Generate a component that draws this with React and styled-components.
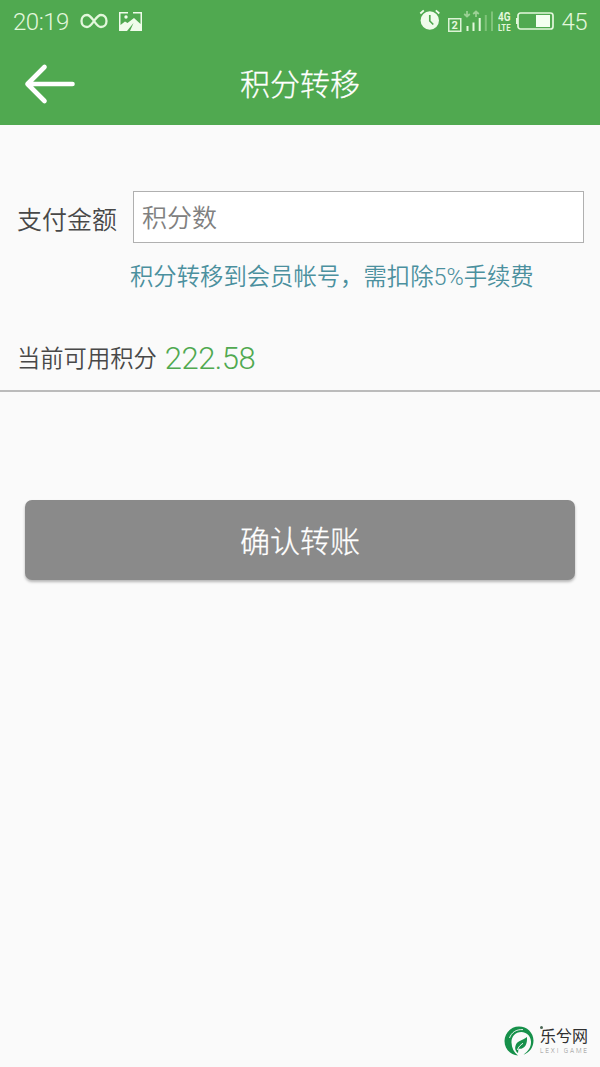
// points transfer screen

import React from "react";
import styled, { createGlobalStyle } from "styled-components";

const GlobalStyle = createGlobalStyle`
  * {
    box-sizing: border-box;
  }
  body {
    margin: 0;
    background: #fafafa;
    font-family: Roboto, "Noto Sans CJK SC", sans-serif;
    font-weight: 350;
  }
`;

const Page = styled.div`
  display: flex;
  flex-direction: column;
  height: 1067px;
  overflow: hidden;
  background: #fafafa;
`;

const Header = styled.header`
  height: 125px;
  background: #50a950;
  color: #ffffff;
`;

const StatusBar = styled.div`
  display: flex;
  justify-content: space-between;
  height: 42px;
  padding: 0 13px;
`;

const StatusGroup = styled.div`
  display: flex;
  align-items: center;
`;

const StatusText = styled.span`
  margin: 2px 0 0 ${(props) => props.$gap || "0"};
  font-size: 24px;
  font-weight: 300;
  line-height: 42px;
  letter-spacing: -0.5px;
  color: #e3f7dc;
`;

const StatusIcon = styled.svg`
  display: block;
  flex: none;
  margin-left: ${(props) => props.$gap || "0"};
`;

const TitleBar = styled.div`
  display: grid;
  grid-template-columns: 100px 1fr 100px;
  align-items: center;
  height: 83px;
`;

const BackButton = styled.button`
  padding: 0 0 0 22px;
  border: 0;
  background: none;
  color: #ffffff;
  text-align: left;

  svg {
    display: block;
  }
`;

const Title = styled.h1`
  margin: 2px 0 0;
  font-size: 30px;
  font-weight: 300;
  line-height: 44px;
  text-align: center;
  -webkit-text-stroke: 0.3px currentColor;
`;

const AmountRow = styled.label`
  display: flex;
  align-items: center;
  margin-top: 66px;
  padding: 0 16px 0 17px;
`;

const AmountLabel = styled.span`
  width: 116px;
  padding-top: 1px;
  font-size: 25px;
  color: #484848;
`;

const AmountInput = styled.input`
  flex: 1;
  min-width: 0;
  height: 52px;
  padding: 2px 8px 0;
  border: 1px solid #b0b0b0;
  border-radius: 0;
  outline: none;
  background: #ffffff;
  font: inherit;
  font-size: 25px;

  &::placeholder {
    color: #808080;
    opacity: 1;
  }
`;

const Hint = styled.p`
  margin: 16px 0 0 130px;
  font-size: 23.35px;
  line-height: 36px;
  white-space: nowrap;
  color: #4b909e;
`;

const BalanceRow = styled.div`
  display: flex;
  align-items: center;
  height: 66px;
  margin-top: 31px;
  padding: 0 17px 2px;
  border-bottom: 2px solid #bbbbbb;
  font-size: 23.3px;
  color: #484848;
`;

const Balance = styled.strong`
  margin: 3px 0 0 8px;
  font-size: 31px;
  font-weight: 300;
  letter-spacing: -0.5px;
  color: #50a950;
`;

const SubmitButton = styled.button`
  height: 80px;
  margin: 108px 25px 0;
  padding: 0 0 3px;
  border: 0;
  border-radius: 7px;
  background: #8a8a8a;
  box-shadow: 0 2px 3px rgba(0, 0, 0, 0.28);
  color: #ffffff;
  font: inherit;
  font-size: 30px;
  font-weight: 300;
  -webkit-text-stroke: 0.3px currentColor;
`;

const Brand = styled.footer`
  display: flex;
  gap: 6px;
  align-items: center;
  align-self: flex-end;
  margin: auto 11px 11px 0;
`;

const BrandText = styled.div`
  display: flex;
  flex-direction: column;
  position: relative;
  width: 49px;
  font-size: 16px;
  font-weight: 400;
  line-height: 20px;
  color: #303030;

  small {
    font-size: 6.5px;
    font-weight: 300;
    line-height: 8px;
    letter-spacing: 1.85px;
    white-space: nowrap;
    color: #929292;
  }
`;

const BrandDot = styled.i`
  position: absolute;
  top: -1px;
  left: 0;
  width: 3px;
  height: 3px;
  border-radius: 50%;
  background: #4b6655;
`;

const InfinityIcon = () => (
  <StatusIcon $gap="11px" width="28" height="16" viewBox="0 0 28 16" fill="none" stroke="#e3f7dc" strokeWidth="2.3">
    <path d="M14 8C11.5 4.5 10 2 7 2C3.5 2 1.5 4.6 1.5 8S3.5 14 7 14C10 14 11.5 11.5 14 8S18 2 21 2C24.5 2 26.5 4.6 26.5 8S24.5 14 21 14C18 14 16.5 11.5 14 8Z" />
  </StatusIcon>
);

const PictureIcon = () => (
  <StatusIcon $gap="11px" width="23" height="19" viewBox="0 0 23 19" fill="#f0fceb">
    <path d="M0 0H9V1.5H1.5V13L6 9.5L8.5 11L15 6L21.5 12V1.5H14V0H23V19H11L14.5 11L8 19H0Z" />
    <circle cx="7" cy="5" r="1.7" />
  </StatusIcon>
);

const AlarmIcon = () => (
  <StatusIcon width="21" height="24" viewBox="0 0 21 24" fill="none">
    <circle cx="10.8" cy="11.5" r="9.2" fill="#f0fceb" />
    <path d="M1.3 4.5L4.8 1.3M20.3 4.5L16.8 1.3" stroke="#f0fceb" strokeWidth="1.8" />
    <path d="M10.8 6V12L14.3 15.5" stroke="#50a950" strokeWidth="1.7" />
  </StatusIcon>
);

const SignalIcon = () => (
  <StatusIcon $gap="8px" width="46" height="24" viewBox="0 0 46 24" fill="none">
    <rect x="0.75" y="9.75" width="12" height="12.5" stroke="#dcf3d5" strokeWidth="1.5" />
    <text x="6.7" y="20" textAnchor="middle" fontSize="11" fontWeight="700" fill="#e3f7dc">2</text>
    <path d="M19 2V8M16.2 5L19 7.5L21.8 5M28 8V2M25.2 5L28 2.5L30.8 5" stroke="#9dd196" strokeWidth="1.7" />
    <path d="M19.5 22V17M25.5 22V13.5M31.7 22V9" stroke="#e3f7dc" strokeWidth="2" />
    <path d="M37.8 22V6M44 22V2.5" stroke="#80c37a" strokeWidth="2" />
  </StatusIcon>
);

const NetworkIcon = () => (
  <StatusIcon $gap="4px" width="14" height="22" viewBox="0 0 14 22" fill="#e3f7dc" fontWeight="700">
    <text x="0" y="11" fontSize="12" textLength="12.5" lengthAdjust="spacingAndGlyphs">4G</text>
    <text x="0" y="21" fontSize="9" textLength="12.5" lengthAdjust="spacingAndGlyphs">LTE</text>
  </StatusIcon>
);

const BatteryIcon = () => (
  <StatusIcon $gap="4px" width="38" height="18" viewBox="0 0 38 18" fill="none">
    <rect x="2" y="1" width="35" height="16" rx="2.5" stroke="#e3f7dc" strokeWidth="1.7" />
    <path d="M1 6V12" stroke="#e3f7dc" strokeWidth="2" />
    <rect x="20" y="3" width="14" height="12" fill="#f4fff0" />
  </StatusIcon>
);

const BackArrow = () => (
  <svg width="54" height="42" viewBox="0 0 54 42" fill="none" stroke="currentColor" strokeWidth="4.6" strokeLinecap="round" strokeLinejoin="round">
    <path d="M22.5 4L5.5 21L22.5 38M5.5 21H50.5" />
  </svg>
);

const LeafLogo = () => (
  <svg width="30" height="30" viewBox="0 0 30 30">
    <path d="M14 29.5C6.5 29 0.5 23 0.5 15S7 0.5 15 0.5C23 0.5 29.5 6.7 29.5 14.5C29.5 21.5 25.5 26.5 19.5 28.7C24.5 25 27.3 21 27 15.5C26.6 9.5 22 6 17.5 6C11 6 7.3 11 7.5 16.5C7.7 22 10 26.5 14 29.5Z" fill="#16904a" />
    <path d="M5.5 12C7.5 6.5 12 3.2 19 3.6" fill="none" stroke="#fafafa" strokeWidth="0.9" />
    <path d="M23 11C23.5 19 20.5 23.3 14.5 22.8L14 27C11 25 10.5 21.7 12 18.5C13.7 15 18 14.5 23 11Z" fill="#16904a" />
    <path d="M13.5 24C14.2 21 16.5 19 19 17.3" fill="none" stroke="#fafafa" strokeWidth="1" />
  </svg>
);

const App = () => {
  return (
    <Page>
      <GlobalStyle />
      <Header>
        <StatusBar>
          <StatusGroup>
            <StatusText>20:19</StatusText>
            <InfinityIcon />
            <PictureIcon />
          </StatusGroup>
          <StatusGroup>
            <AlarmIcon />
            <SignalIcon />
            <NetworkIcon />
            <BatteryIcon />
            <StatusText $gap="7px">45</StatusText>
          </StatusGroup>
        </StatusBar>
        <TitleBar>
          <BackButton aria-label="返回">
            <BackArrow />
          </BackButton>
          <Title>积分转移</Title>
        </TitleBar>
      </Header>
      <AmountRow>
        <AmountLabel>支付金额</AmountLabel>
        <AmountInput placeholder="积分数" />
      </AmountRow>
      <Hint>积分转移到会员帐号，需扣除5%手续费</Hint>
      <BalanceRow>
        当前可用积分
        <Balance>222.58</Balance>
      </BalanceRow>
      <SubmitButton>确认转账</SubmitButton>
      <Brand>
        <LeafLogo />
        <BrandText>
          <BrandDot />
          乐兮网
          <small>LEXI GAME</small>
        </BrandText>
      </Brand>
    </Page>
  );
};

export default App;
